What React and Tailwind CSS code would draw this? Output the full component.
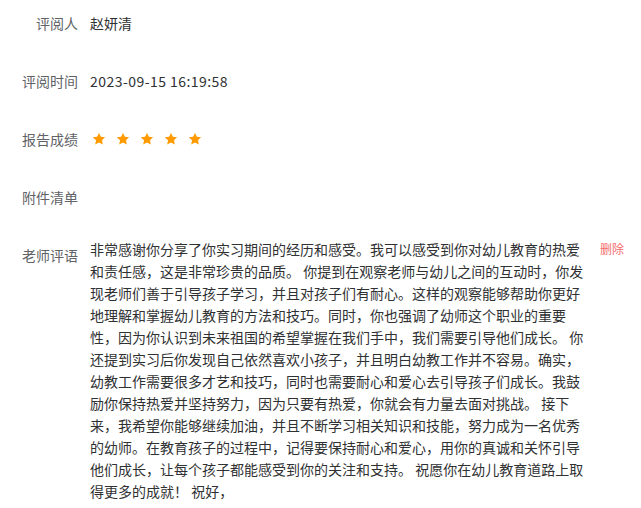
const lines = [
  '非常感谢你分享了你实习期间的经历和感受。我可以感受到你对幼儿教育的热爱',
  '和责任感，这是非常珍贵的品质。 你提到在观察老师与幼儿之间的互动时，你发',
  '现老师们善于引导孩子学习，并且对孩子们有耐心。这样的观察能够帮助你更好',
  '地理解和掌握幼儿教育的方法和技巧。同时，你也强调了幼师这个职业的重要',
  '性，因为你认识到未来祖国的希望掌握在我们手中，我们需要引导他们成长。 你',
  '还提到实习后你发现自己依然喜欢小孩子，并且明白幼教工作并不容易。确实，',
  '幼教工作需要很多才艺和技巧，同时也需要耐心和爱心去引导孩子们成长。我鼓',
  '励你保持热爱并坚持努力，因为只要有热爱，你就会有力量去面对挑战。 接下',
  '来，我希望你能够继续加油，并且不断学习相关知识和技能，努力成为一名优秀',
  '的幼师。在教育孩子的过程中，记得要保持耐心和爱心，用你的真诚和关怀引导',
  '他们成长，让每个孩子都能感受到你的关注和支持。 祝愿你在幼儿教育道路上取',
  '得更多的成就！ 祝好，',
]

function Star() {
  return (
    <svg width="14" height="14" viewBox="0 0 24 24" className="mr-[10px]">
      <path
        fill="#ff9a00"
        d="M12 1.5l3.2 6.7 7.3.9-5.4 5.1 1.4 7.3L12 17.9l-6.5 3.6 1.4-7.3-5.4-5.1 7.3-.9z"
      />
    </svg>
  )
}

function Row({ label, children }) {
  return (
    <div className="flex h-[32px] items-center">
      <div className="w-[90px] shrink-0 pr-3 text-right text-[#606266]">{label}</div>
      <div className="text-[#303133]">{children}</div>
    </div>
  )
}

export default function App() {
  return (
    <div
      className="min-h-screen bg-white pt-[7px] text-[14px]"
      style={{ fontFamily: '"Noto Sans CJK SC", "Noto Sans", sans-serif' }}
    >
      <div className="flex flex-col gap-[26px]">
        <Row label="评阅人">赵妍清</Row>
        <Row label="评阅时间">
          <span className="tracking-[0.45px]">2023-09-15 16:19:58</span>
        </Row>
        <Row label="报告成绩">
          <div className="flex items-center pl-[2px]">
            <Star />
            <Star />
            <Star />
            <Star />
            <Star />
          </div>
        </Row>
        <Row label="附件清单"></Row>

        {/* 老师评语 */}
        <div className="flex items-start">
          <div className="w-[90px] shrink-0 pr-3 pt-[5px] text-right leading-[22px] text-[#606266]">
            老师评语
          </div>
          <div className="-mt-[1px] w-[510px] shrink-0 leading-[22px] text-[#303133]">
            {lines.map((l, i) => (
              <div key={i} className="whitespace-pre">{l}</div>
            ))}
          </div>
          <button className="-mt-[1px] text-[12px] leading-[22px] text-[#f56c6c]">删除</button>
        </div>
      </div>
    </div>
  )
}
